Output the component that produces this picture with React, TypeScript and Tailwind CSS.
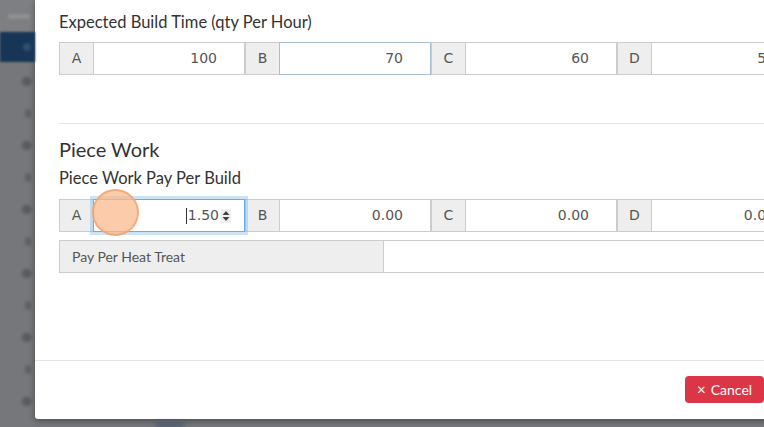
import React from "react";

const lato = { fontFamily: "Lato, 'Open Sans', sans-serif" };

function Group({ letter, value, state, showSpinner }: { letter: string; value: string; state?: "focus" | "hover"; showSpinner?: boolean }) {
  const border =
    state === "focus"
      ? "border-[#66afe9] shadow-[0_0_0_3px_rgba(102,175,233,0.35)] z-10"
      : state === "hover"
      ? "border-[#a9bfd6]"
      : "border-[#cccccc]";
  return (
    <div className="flex h-[33px] shrink-0">
      <div className="w-[35px] shrink-0 flex items-center justify-center bg-[#eeeeee] border border-[#cccccc] -ml-px first:ml-0 text-[14px] text-[#555]" style={{ fontFamily: "'DejaVu Sans', sans-serif" }}>
        {letter}
      </div>
      <div className={`relative w-[152px] shrink-0 flex items-center justify-end bg-white border -ml-px pr-[27px] text-[14px] text-[#555] ${border}`} style={{ fontFamily: "'DejaVu Sans', sans-serif" }}>
        {showSpinner ? (
          <div className="flex items-center -mr-[14px]">
            <span className="w-px h-[16px] bg-[#333] mr-px" />
            <span>{value}</span>
            <svg width="10" height="14" viewBox="0 0 10 14" className="ml-[2px] bg-[#f0f0f0]">
              <path d="M5 2 L8.5 6 H1.5 Z" fill="#444" />
              <path d="M5 12 L8.5 8 H1.5 Z" fill="#444" />
            </svg>
          </div>
        ) : (
          <span>{value}</span>
        )}
      </div>
    </div>
  );
}

export default function App() {
  return (
    <div className="relative w-[764px] h-[427px] overflow-hidden bg-[#76777a] flex">
      {/* blurred sidebar behind the modal */}
      <div className="w-[35px] shrink-0 flex flex-col">
        <div className="h-[32px] bg-[#7e7f82] flex items-center pl-[8px]">
          <div className="h-[5px] w-[22px] bg-[#8e8f91] blur-[1px]" />
        </div>
        <div className="h-[30px] bg-[#173657] blur-[1px] flex items-center justify-end pr-[4px]">
          <div className="w-[8px] h-[8px] rounded-full bg-[#2f4d6c]" />
        </div>
        <div className="flex flex-col gap-[23px] items-end pr-[3px] pt-[15px] blur-[1.5px]">
          {Array.from({ length: 11 }).map((_, i) => (
            <div key={i} className={`h-[9px] ${i % 2 ? "w-[7px] bg-[#606164]" : "w-[10px] bg-[#5a5b5e]"} rounded-full`} />
          ))}
        </div>
      </div>

      <div className="flex flex-col w-[800px] shrink-0">
        <div className="h-[419px] bg-white flex flex-col shadow-[0_2px_6px_rgba(0,0,0,0.35)] rounded-bl-[3px]">
          <div className="flex-1 pl-[24px] pt-[12px] text-[#333]" style={lato}>
            <div className="text-[16.5px] leading-[21px]">Expected Build Time (qty Per Hour)</div>
            <div className="flex mt-[9px]">
              <Group letter="A" value="100" />
              <Group letter="B" value="70" state="hover" />
              <Group letter="C" value="60" />
              <Group letter="D" value="50" />
            </div>
            <div className="mt-[48px] h-px bg-[#e5e5e5]" />
            <div className="mt-[13px] text-[20px] leading-[24px]">Piece Work</div>
            <div className="mt-[7px] text-[16.5px] leading-[21px]">Piece Work Pay Per Build</div>
            <div className="flex mt-[10px]">
              <Group letter="A" value="1.50" state="focus" showSpinner />
              <Group letter="B" value="0.00" />
              <Group letter="C" value="0.00" />
              <Group letter="D" value="0.00" />
            </div>
            <div className="flex mt-[8px] h-[33px]">
              <div className="w-[325px] shrink-0 flex items-center pl-[12px] bg-[#eeeeee] border border-[#cccccc] text-[14px] text-[#555]" style={lato}>
                Pay Per Heat Treat
              </div>
              <div className="flex-1 bg-white border border-[#cccccc] -ml-px" />
            </div>
          </div>
          <div className="h-px bg-[#e5e5e5]" />
          <div className="h-[58px] flex items-start pt-[15px] pl-[650px]">
            <button className="h-[27px] px-[12px] rounded-[4px] bg-[#dc3545] text-white text-[14px] flex items-center gap-[5px]" style={lato}>
              <span className="text-[15px] leading-none">×</span>
              <span>Cancel</span>
            </button>
          </div>
        </div>
        <div className="flex-1 flex items-end">
          <div className="ml-[120px] w-[30px] h-[5px] bg-[#4d5b70] blur-[2px] rounded-full" />
        </div>
      </div>

      {/* click highlight */}
      <div className="absolute z-20 left-[92px] top-[189px] w-[47px] h-[47px] rounded-full bg-[#f9b98e]/75 border-2 border-[#f0a068]/70" />
    </div>
  );
}
